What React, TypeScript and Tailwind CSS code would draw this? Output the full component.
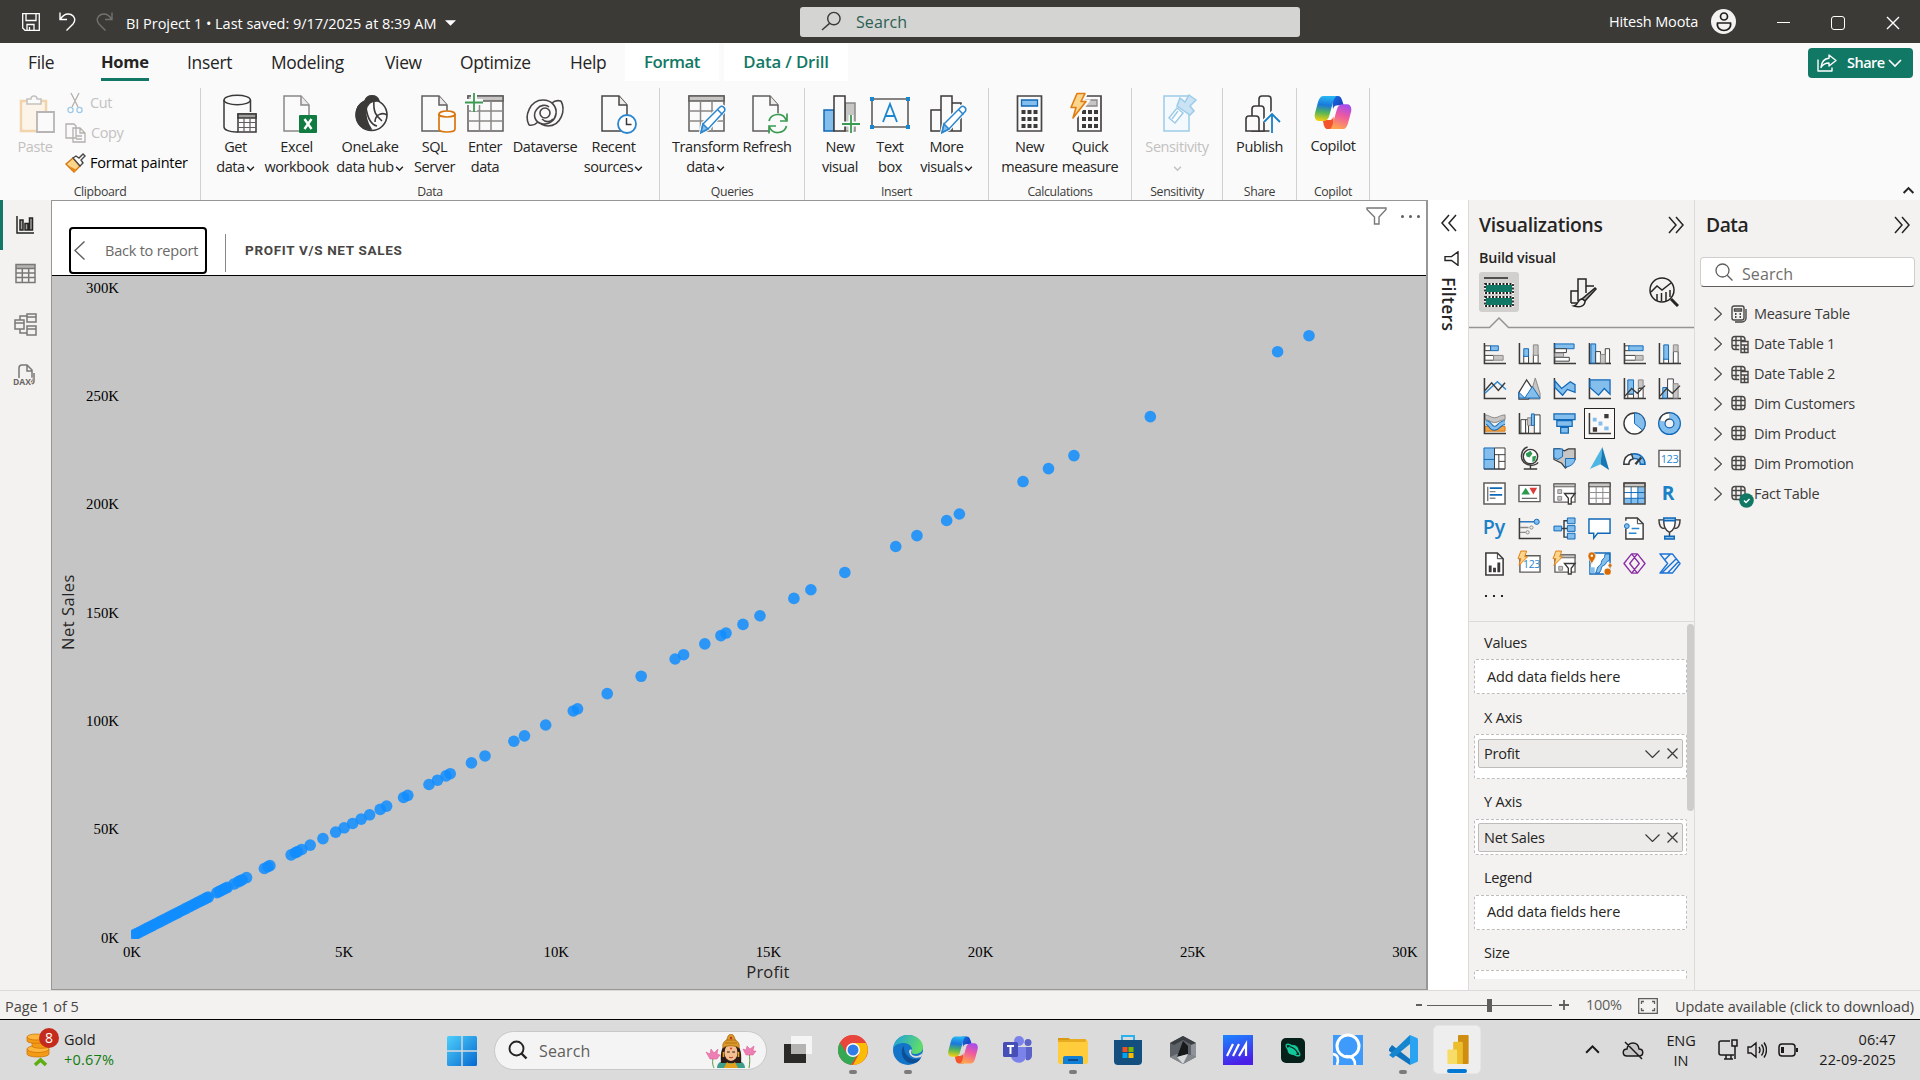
import React from "react";

type P = { children?: React.ReactNode };

const DARK = "#3b3a39";
const BLUE = "#1068b8";
const SKY = "#83beec";
const GREY = "#c8c6c4";
const MID = "#8a8886";

/* ---------- shared drawing helpers ---------- */

function Chevron({ dir = "down", className = "" }: { dir?: "down" | "right" | "left" | "up"; className?: string }) {
  const d = { down: "M2 5l6 6 6-6", right: "M5 2l6 6-6 6", left: "M11 2L5 8l6 6", up: "M2 11l6-6 6 6" }[dir];
  return (
    <svg viewBox="0 0 16 16" className={className} fill="none" stroke="currentColor">
      <path d={d} />
    </svg>
  );
}

function DoubleChevron({ left = false }: { left?: boolean }) {
  return (
    <svg viewBox="0 0 16 16" className="size-4 shrink-0 overflow-visible" fill="none" stroke="#252423" strokeWidth="1.5">
      {left ? <path d="M8 0L1 8l7 8M15 0L8 8l7 8" /> : <path d="M1 0l7 8-7 8M8 0l7 8-7 8" />}
    </svg>
  );
}

function CopilotLogo({ className }: { className: string }) {
  return (
    <svg viewBox="0 0 40 36" className={className}>
      <defs>
        <linearGradient id="cpA" x1="0.4" y1="0" x2="0.3" y2="1">
          <stop offset="0" stopColor="#27b6f2" />
          <stop offset="0.35" stopColor="#1a78dc" />
          <stop offset="0.65" stopColor="#52b45a" />
          <stop offset="1" stopColor="#f6d10c" />
        </linearGradient>
        <linearGradient id="cpB" x1="0.7" y1="0" x2="0.4" y2="1">
          <stop offset="0" stopColor="#a34bf0" />
          <stop offset="0.45" stopColor="#ee5aa0" />
          <stop offset="1" stopColor="#ffa64d" />
        </linearGradient>
        <linearGradient id="cpC" x1="0" y1="0" x2="1" y2="1">
          <stop offset="0" stopColor="#1b6fe0" />
          <stop offset="1" stopColor="#1234b8" />
        </linearGradient>
      </defs>
      <path d="M19 0h6c3 0 4 2 5 5l1.500 5h-6c-3 0-4.500 1-5.500 4z" fill="url(#cpC)" />
      <path d="M21 36h-6c-3 0-4-2-5-5l-1-5h6c3 0 4.500-1 5.500-4z" fill="#f2552c" />
      <path d="M10 0h14c-2 1-3 3-4 7l-4 14c-1 4-3 6-7 6H5c-4 0-6-4-4-10L4 6c1.200-4 3-6 6-6z" fill="url(#cpA)" />
      <path d="M30 36H16c2-1 3-3 4-7l4-14c1-4 3-6 7-6h4c4 0 6 4 4 10l-3 11c-1.200 4-3 6-6 6z" fill="url(#cpB)" />
    </svg>
  );
}

/* ---------- title bar ---------- */

function TitleBar() {
  return (
    <header className="flex h-[43px] shrink-0 items-center bg-[#3b3a37] text-white">
      <svg viewBox="0 0 18 18" className="ml-[22px] size-[18px]" fill="none" stroke="white" strokeWidth="1.3">
        <path d="M.7.7h16.600v16.600H3L.7 15zM4 .7v6.800h10V.7M5 17v-5.500h7V17M7.500 14v3" />
      </svg>
      <svg viewBox="0 0 18 19" className="ml-[19px] h-[19px] w-[18px]" fill="none" stroke="white" strokeWidth="1.4">
        <path d="M1 .5v7h7M1 7.500C4 3 8 1 12 2.500c4 2 5 6 2 9.500L7.500 18.500" />
      </svg>
      <svg viewBox="0 0 18 19" className="ml-[18px] h-[19px] w-[18px]" fill="none" stroke="#73726f" strokeWidth="1.4">
        <path d="M17 .5v7h-7M17 7.500C14 3 10 1 6 2.500 2 4.500 1 8.500 4 12l6.500 6.500" />
      </svg>
      <span className="mt-[5px] ml-[13px] w-[312px] whitespace-nowrap text-[14.5px] tracking-[-0.03px]">
        BI Project 1 • Last saved: 9/17/2025 at 8:39 AM
      </span>
      <svg viewBox="0 0 12 6" className="mt-[2px] ml-[7px] h-[6px] w-[11px]" fill="white">
        <path d="M0 0h12L6 6z" />
      </svg>
      <div className="ml-[344px] flex h-[30px] w-[500px] items-center rounded-[3px] bg-[#d4d4d2]">
        <svg viewBox="0 0 22 20" className="-mt-[2px] ml-[21px] h-5 w-[21px]" fill="none" stroke="#3b3a37" strokeWidth="1.5">
          <circle cx="13.500" cy="7.500" r="6.500" />
          <path d="M9 12.500L1 19.500" />
        </svg>
        <span className="ml-[14px] text-[16px] tracking-[0.1px] text-[#2b5f54]">Search</span>
      </div>
      <span className="ml-[309px] w-[89px] whitespace-nowrap text-[14.5px] tracking-[-0.15px]">Hitesh Moota</span>
      <span className="ml-[13px] flex size-[25px] items-center justify-center rounded-full bg-[#f3f2f1]">
        <svg viewBox="0 0 20 20" className="size-5" fill="none" stroke="#201f1e" strokeWidth="1.7">
          <circle cx="10" cy="4.500" r="3.500" />
          <path d="M3.500 11h13c1 5-3 7.500-6.500 7.500S2.500 16 3.500 11z" />
        </svg>
      </span>
      <span className="mt-[2px] ml-[41px] h-[1.5px] w-[13px] bg-white" />
      <span className="mt-[2px] ml-[41px] size-[14px] rounded-[3px] border-[1.5px] border-white" />
      <svg viewBox="0 0 14 14" className="mt-[2px] ml-[41px] size-[14px]" stroke="white" strokeWidth="1.4">
        <path d="M1 1l12 12M13 1L1 13" />
      </svg>
    </header>
  );
}

/* ---------- ribbon tabs ---------- */

function Tabs() {
  return (
    <div className="flex h-[38px] shrink-0 items-stretch whitespace-nowrap text-[17.4px] leading-[38px] tracking-[-0.3px] text-[#252423]">
      <span className="ml-7 w-[73px]">File</span>
      <span className="w-[48px] border-b-[3px] border-[#117865] text-[16.5px] font-bold tracking-[-0.25px]">Home</span>
      <span className="ml-[38px] w-[84px]">Insert</span>
      <span className="w-[114px]">Modeling</span>
      <span className="w-[75px]">View</span>
      <span className="w-[110px]">Optimize</span>
      <span className="w-[55px]">Help</span>
      <span className="flex w-[94px] justify-center bg-white text-[16.8px] font-semibold tracking-[-0.5px] text-[#117865]">Format</span>
      <span className="ml-[5px] flex w-[124px] justify-center bg-white text-[16.8px] font-semibold tracking-[-0.15px] text-[#117865]">
        Data / Drill
      </span>
      <span className="mt-[5px] mr-[7px] ml-auto flex h-[30px] w-[105px] items-center rounded-[4px] bg-[#117865] text-[14.5px] font-semibold tracking-[-0.5px] text-white">
        <svg viewBox="0 0 20 18" className="ml-[9px] h-[18px] w-5" fill="none" stroke="white" strokeWidth="1.4" strokeLinejoin="round">
          <path d="M1 5.500V17h14v-3.500M12 1l7 5.500-7 5.500V9c-4 0-6 1-8 4.500C4.500 8 7.500 4.500 12 4.200z" />
        </svg>
        <span className="ml-[10px]">Share</span>
        <Chevron className="ml-[2px] size-4 stroke-[1.6]" />
      </span>
    </div>
  );
}

/* ---------- ribbon icons (40 x 40 boxes) ---------- */

function Page({ x = 4, s = "#605e5c" }: { x?: number; s?: string }) {
  return (
    <g transform={`translate(${x} 0)`} fill="#fafafa" stroke={s} strokeWidth="1.500">
      <path d="M1 2h17l8 9v26H1z" />
      <path d="M18 2v9h8" fill="#edebe9" />
    </g>
  );
}

const pencil = (
  <g stroke="#2a86cf" strokeWidth="1.500">
    <path d="M17 30L34 13c2-2 6 1 4 4L22 35l-7 3.500z" fill="#fff" stroke="#fafafa" strokeWidth="4" />
    <path d="M17 30L34 13c2-2 6 1 4.500 4L22 35l-7 3.500z" fill="#fff" />
    <path d="M17 30l5 5-7 3.500z" fill={SKY} />
    <path d="M31.500 15.500l5 5" />
  </g>
);

const ribbonIcons: Record<string, React.ReactNode> = {
  paste: (
    <g strokeWidth="1.500" opacity="0.75">
      <path d="M6 7h25v30H6z" fill="#fdf3e4" stroke="#f0c690" strokeWidth="2.500" />
      <path d="M12 9V5h4c0-4 6-4 6 0h4v5H12z" fill="#fafafa" stroke="#b3b0ad" />
      <path d="M22 18h17v20H22z" fill="#fafafa" stroke="#a19f9d" strokeWidth="1.800" />
    </g>
  ),
  getdata: (
    <g fill="#fafafa" stroke="#3b3a39" strokeWidth="1.500">
      <path d="M8 6v27c0 3 6 5 12 5h2M34.500 6v12" />
      <ellipse cx="21.200" cy="6" rx="13.200" ry="4.800" />
      <path d="M22 20h18v18H22z" />
      <path d="M22 20h18v4H22z" fill="#a19f9d" />
      <path d="M28 24v14M34 24v14M22 28.500h18M22 33.500h18" stroke="#605e5c" strokeWidth="1.200" />
    </g>
  ),
  excel: (
    <g>
      <Page x={6} s="#8a8886" />
      <rect x="22" y="21" width="18" height="18" rx="1" fill="#107c41" />
      <path d="M27.500 25l7 10M34.500 25l-7 10" stroke="white" strokeWidth="2.400" />
    </g>
  ),
  onelake: (
    <g fill="none" stroke="#3b3a39" strokeWidth="1.600">
      <circle cx="21.500" cy="21" r="15.500" />
      <path d="M8 13c2-3 5-5 7-6 2-7 12-7 14 0-8-1-12 3-13 9-1 7 1 13 5 19C11 36 3 26 8 13z" fill="#3b3a39" />
      <path d="M16 14c2 12 6 17 11 18M24 6c-1 12 2 16 8 21M25 28c0-8 8-10 12-7" />
    </g>
  ),
  sql: (
    <g>
      <Page x={6} />
      <path d="M24 20v15c0 4 16 4 16 0V20" fill="#fafafa" stroke="#d8750c" strokeWidth="1.700" />
      <ellipse cx="32" cy="20" rx="8" ry="3" fill="#fff" stroke="#d8750c" strokeWidth="1.700" />
    </g>
  ),
  enter: (
    <g fill="#fafafa" stroke="#605e5c" strokeWidth="1.500">
      <path d="M3 2h35v35H3z" />
      <path d="M3 2h35v5H3z" fill={GREY} />
      <path d="M14.500 7v30M26 7v30M3 17h35M3 27h35" stroke={MID} />
      <path d="M9-1v18M0 8h18" stroke="#fafafa" strokeWidth="6" />
      <path d="M9-1v19M0 8.500h18" stroke="#3a9b52" strokeWidth="1.800" />
    </g>
  ),
  dataverse: (
    <g fill="none" stroke="#484644" strokeWidth="1.600">
      <circle cx="20" cy="19" r="5" />
      <path d="M4 31C-1 22 5 6 18 6c9 0 14 7 13 14-1 6-7 11-13 10-8-1-11-9-6-15 3-4 9-5 12-2" />
      <path d="M36 7c5 9 0 25-13 25-3 0-5-1-7-2M4 31c4 1 7-1 9-3M36 7c-4-1-7 0-9 2" />
      <path d="M28 25c-3 4-8 3-11 0" />
    </g>
  ),
  recent: (
    <g>
      <Page x={7} s="#484644" />
      <circle cx="33" cy="30" r="9" fill="#fff" stroke="#2a86cf" strokeWidth="1.800" />
      <path d="M32.500 24v6.500h5" fill="none" stroke="#3b3a39" strokeWidth="1.500" />
    </g>
  ),
  transform: (
    <g fill="#fafafa" stroke="#605e5c" strokeWidth="1.500">
      <path d="M3 2h35v35H3z" />
      <path d="M3 2h35v5H3z" fill={GREY} />
      <path d="M14.500 7v30M26 7v30M3 17h35M3 27h35" stroke={MID} />
      {pencil}
    </g>
  ),
  refresh: (
    <g>
      <Page x={5} s="#605e5c" />
      <circle cx="31" cy="30" r="11" fill="#fafafa" />
      <path d="M22 27c2-8 14-9 17-1M40 19.500V27h-7M39.500 32c-2 8-14 9-17 1M22 39.500V32h7" fill="none" stroke="#3a9b52" strokeWidth="1.700" />
    </g>
  ),
  newvisual: (
    <g stroke="#3b3a39" strokeWidth="1.500">
      <path d="M25 9h10v28H25z" fill={GREY} stroke={MID} />
      <path d="M4 16h10v21H4z" fill={SKY} stroke={BLUE} />
      <path d="M14 2h11v35H14z" fill="#fafafa" />
      <path d="M31 21v18M22 30h18" stroke="#fafafa" strokeWidth="5" />
      <path d="M31 21v18M22 30h18" stroke="#3a9b52" strokeWidth="1.800" />
    </g>
  ),
  textbox: (
    <g>
      <path d="M2 5h36v28H2z" fill="#fafafa" stroke="#605e5c" strokeWidth="1.600" />
      <path d="M0 3h4v4H0zM36 3h4v4h-4zM0 31h4v4H0zM36 31h4v4h-4z" fill="#1a86d0" />
      <path d="M13 28l7-18 7 18M15.500 22h9" fill="none" stroke="#1a86d0" strokeWidth="1.800" />
    </g>
  ),
  morevisuals: (
    <g fill="#fafafa" stroke="#3b3a39" strokeWidth="1.500">
      <path d="M25 9h9v28h-9zM4 16h10v21H4zM14 2h11v35H14z" />
      {pencil}
    </g>
  ),
  newmeasure: (
    <g>
      <path d="M7.500 2h24v35h-24z" fill="#fafafa" stroke="#484644" strokeWidth="1.700" />
      <path d="M11.500 6h16v6h-16z" fill={SKY} stroke={BLUE} strokeWidth="1.300" />
      <path d="M11.500 16h4v4h-4zM17.500 16h4v4h-4zM23.500 16h4v4h-4zM11.500 23h4v4h-4zM17.500 23h4v4h-4zM23.500 23h4v4h-4zM11.500 30h4v4h-4zM17.500 30h4v4h-4zM23.500 30h4v4h-4z" fill="#3b3a39" />
    </g>
  ),
  quick: (
    <g>
      <path d="M8 2h23v35H8z" fill="#fafafa" stroke="#484644" strokeWidth="1.700" />
      <path d="M12 6h15v6H12z" fill={GREY} stroke={MID} strokeWidth="1.300" />
      <path d="M12 16h4v4h-4zM18 16h4v4h-4zM24 16h4v4h-4zM12 23h4v4h-4zM18 23h4v4h-4zM24 23h4v4h-4zM12 30h4v4h-4zM18 30h4v4h-4zM24 30h4v4h-4z" fill="#3b3a39" />
      <path d="M7 0h8l-4 8h5L4 24l2-11H1z" fill="#fbd58b" stroke="#fafafa" strokeWidth="5" />
      <path d="M7-.5h8l-4 8h5L3 24l3-10.500H1z" fill="#fbd58b" stroke="#e07d10" strokeWidth="1.600" strokeLinejoin="round" />
    </g>
  ),
  sensitivity: (
    <g fill="#f3f9fd" stroke="#9dcbe8" strokeWidth="1.500">
      <path d="M7 2h25v35H7z" />
      <path d="M12 24l8-10 6 5-8 10zM15 25l6-8" fill="#fff" />
      <path d="M23 4l5 4 4-7 7 5-6 6 4 5-4 4-13-9z" fill="#c9e3f4" />
    </g>
  ),
  publish: (
    <g fill="#fafafa" stroke="#3b3a39" strokeWidth="1.600">
      <path d="M19 37V5c0-2 1-3 3-3h6c2 0 3 1 3 3v32z" />
      <path d="M12 37V15c0-2 1-3 3-3h6c2 0 3 1 3 3v22z" />
      <path d="M6 37V25c0-2 1-3 3-3h7c2 0 3 1 3 3v12z" />
      <path d="M32 39V20M24 28l8-8 8 8" fill="none" stroke="#fafafa" strokeWidth="5" />
      <path d="M32 39V20M24 28l8-8 8 8" fill="none" stroke="#1a7fc4" strokeWidth="1.800" />
    </g>
  ),
};

function RibbonButton({
  icon,
  l1,
  l2,
  caret,
  width,
  dim,
}: {
  icon: string;
  l1: string;
  l2?: string;
  caret?: boolean;
  width: string;
  dim?: boolean;
}) {
  return (
    <div className={`flex shrink-0 flex-col items-center whitespace-nowrap leading-5 ${width} ${dim ? "text-[#c3c1bf]" : "text-[#252423]"}`}>
      {icon === "copilot" ? (
        <CopilotLogo className="mt-[2px] mb-[4px] h-[34px] w-[38px]" />
      ) : (
        <svg viewBox="0 0 40 40" className="size-10 overflow-visible">
          {ribbonIcons[icon]}
        </svg>
      )}
      <span className="mt-[3px]">{l1}</span>
      <span className="flex h-5 items-center">
        {l2}
        {caret && <Chevron className="mt-[3px] ml-px size-[9px] stroke-[2.6]" />}
      </span>
    </div>
  );
}

function Group({ name, width, pad = "", children }: P & { name: string; width: string; pad?: string }) {
  return (
    <div className={`flex shrink-0 flex-col border-r border-[#d2d0ce] ${width}`}>
      <div className={`flex h-[88px] ${pad}`}>{children}</div>
      <span className="mt-[6px] text-center text-[12.3px] leading-5 tracking-[-0.35px] text-[#3b3a39]">{name}</span>
    </div>
  );
}

function Ribbon() {
  return (
    <div className="flex h-[119px] shrink-0 pt-[7px] text-[14.5px] tracking-[-0.4px]">
      <Group name="Clipboard" width="w-[201px]">
        <div className="flex w-full pt-[6px]">
          <RibbonButton icon="paste" l1="Paste" width="w-[70px]" dim />
          <div className="-mt-[6px] -ml-[5px] flex flex-col leading-[30px] whitespace-nowrap">
            <span className="flex h-[30px] items-center gap-[5px] text-[#c3c1bf]">
              <svg viewBox="0 0 20 22" className="h-[22px] w-5" fill="none" strokeWidth="1.300">
                <path d="M6 1l7 14M14 1L7 15" stroke="#b3b0ad" />
                <circle cx="5.500" cy="18" r="2.600" stroke="#9fc9e6" />
                <circle cx="14.500" cy="18" r="2.600" stroke="#9fc9e6" />
              </svg>
              Cut
            </span>
            <span className="flex h-[30px] items-center gap-[5px] text-[#c3c1bf]">
              <svg viewBox="0 0 21 20" className="h-5 w-[21px]" fill="#fafafa" stroke="#b3b0ad" strokeWidth="1.300">
                <path d="M1 1h8l2 2v12H1zM8 5h7l5 5v9H8zM15 5v5h5M11 13h6M11 16h6" />
              </svg>
              Copy
            </span>
            <span className="flex h-[30px] items-center gap-[4px]">
              <svg viewBox="0 0 21 20" className="h-5 w-[21px]" strokeWidth="1.400">
                <path d="M1 11l7-6 7 8-6 6z" fill="#fbd58b" stroke="#d8750c" />
                <path d="M4 13l8 4-3 2z" fill="#e88a1a" />
                <path d="M8 5l3-2 3 2 4-4 2 2-4 4 2 3-3 3z" fill="#fff" stroke="#484644" />
              </svg>
              <span className="tracking-[-0.25px]">Format painter</span>
            </span>
          </div>
        </div>
      </Group>
      <Group name="Data" width="w-[459px]" pad="pl-[4px] pt-[6px]">
        <RibbonButton icon="getdata" l1="Get" l2="data" caret width="w-[61px]" />
        <RibbonButton icon="excel" l1="Excel" l2="workbook" width="w-[61px]" />
        <RibbonButton icon="onelake" l1="OneLake" l2="data hub" caret width="w-[86px]" />
        <RibbonButton icon="sql" l1="SQL" l2="Server" width="w-[43px]" />
        <RibbonButton icon="enter" l1="Enter" l2="data" width="w-[58px]" />
        <RibbonButton icon="dataverse" l1="Dataverse" width="w-[62px]" />
        <RibbonButton icon="recent" l1="Recent" l2="sources" caret width="w-[75px]" />
      </Group>
      <Group name="Queries" width="w-[145px]" pad="pl-[9px] pt-[6px]">
        <RibbonButton icon="transform" l1="Transform" l2="data" caret width="w-[73px]" />
        <RibbonButton icon="refresh" l1="Refresh" width="w-[50px]" />
      </Group>
      <Group name="Insert" width="w-[184px]" pad="pl-[7px] pt-[6px]">
        <RibbonButton icon="newvisual" l1="New" l2="visual" width="w-[56px]" />
        <RibbonButton icon="textbox" l1="Text" l2="box" width="w-[44px]" />
        <RibbonButton icon="morevisuals" l1="More" l2="visuals" caret width="w-[69px]" />
      </Group>
      <Group name="Calculations" width="w-[143px]" pad="pl-[12px] pt-[6px]">
        <RibbonButton icon="newmeasure" l1="New" l2="measure" width="w-[57px]" />
        <RibbonButton icon="quick" l1="Quick" l2="measure" width="w-[64px]" />
      </Group>
      <Group name="Sensitivity" width="w-[91px]" pad="pt-[6px]">
        <RibbonButton icon="sensitivity" l1="Sensitivity" caret width="w-[90px]" dim />
      </Group>
      <Group name="Share" width="w-[74px]" pad="pt-[6px]">
        <RibbonButton icon="publish" l1="Publish" width="w-[73px]" />
      </Group>
      <Group name="Copilot" width="w-[73px]" pad="pt-[6px]">
        <RibbonButton icon="copilot" l1="Copilot" width="w-[72px]" />
      </Group>
      <Chevron dir="up" className="mr-[5px] mb-[3px] ml-auto size-[13px] self-end stroke-[2.5] text-[#252423]" />
    </div>
  );
}

/* ---------- left navigation ---------- */

function NavItem({ active, children }: P & { active?: boolean }) {
  return (
    <div className={`flex h-[50px] items-center justify-center ${active ? "border-l-[3px] border-[#117865] pr-[5px]" : "pr-[2px]"}`}>
      <svg viewBox="0 0 24 24" className="size-6 overflow-visible" fill="none" stroke={active ? "#252423" : "#7a7876"} strokeWidth="1.500">
        {children}
      </svg>
    </div>
  );
}

function LeftNav() {
  return (
    <nav className="w-[51px] shrink-0 bg-[#f3f2f1]">
      <NavItem active>
        <path d="M4 3v17h17" />
        <path d="M7 7h3v10H7zM12 10.500h3V17h-3zM16.500 5h3v12h-3z" fill="#a19f9d" />
      </NavItem>
      <NavItem>
        <path d="M3 1.500h19v18H3zM3 5.500h19M3 10h19M3 14.500h19M9.300 5.500v14M15.700 5.500v14" />
        <path d="M3 3.500h19" strokeWidth="3" opacity="0.5" />
      </NavItem>
      <NavItem>
        <path d="M2 7h9v9H2zM2 10h9M14 1h9v8h-9zM14 4h9M14 13h9v9h-9zM14 16h9M7 7V3h7M7 16v4h7" />
      </NavItem>
      <NavItem>
        <path d="M6 15V5c0-2 1-3 3-3h5l5 5v10c0 1-1 2-2 2M14 2v6h5M21 10v8c0 2-1 3-3 3" />
        <text x="0" y="21.500" fontSize="8.500" fontWeight="700" fill="#6a6866" stroke="#f3f2f1" strokeWidth="2.500" paintOrder="stroke">
          DAX
        </text>
      </NavItem>
    </nav>
  );
}

/* ---------- scatter chart ---------- */

const profits = [
  27.74, 27, 24, 22.2, 21.6, 21, 19.5, 19.2, 18.5, 18, 16.8, 16, 15.6, 14.8, 14.4, 14, 13.88, 13.5, 13, 12.8, 12, 11.2, 10.5, 10.4,
  9.75, 9.25, 9, 8.32, 8, 7.5, 7.4, 7.2, 7, 6.5, 6.4, 6, 5.85, 5.6, 5.4, 5.2, 5, 4.8, 4.5, 4.2, 4, 3.9, 3.85, 3.75, 3.25, 3.2, 3.12,
  2.7, 2.6, 2.55, 2.5, 2.4, 2.25, 2.2, 2.16, 2.1, 2.05, 2, 1.8, 1.76,
];
for (let p = 1.72; p >= 0; p -= 0.06) profits.push(p);

const px = (p: number) => 132 + p * 42.43;
const py = (p: number) => 936 - p * 21.64;

function Scatter() {
  return (
    <svg viewBox="52 276 1374 713" className="h-[713px] w-[1374px]">
      <clipPath id="plot">
        <rect x="131" y="276" width="1290" height="663" />
      </clipPath>
      <g fill="#118dff" fillOpacity="0.85" clipPath="url(#plot)">
        {profits.map((p, i) => (
          <circle key={i} cx={px(p)} cy={py(p)} r="5.8" />
        ))}
      </g>
      <g fontFamily="'Liberation Serif', serif" fontSize="14.800" fill="#000">
        {[0, 50, 100, 150, 200, 250, 300].map((v) => (
          <text key={v} x="119" y={942.6 - v * 2.167} textAnchor="end">
            {v}K
          </text>
        ))}
        {[0, 5, 10, 15, 20, 25, 30].map((v) => (
          <text key={v} x={px(v)} y="957" textAnchor="middle">
            {v}K
          </text>
        ))}
      </g>
      <g fill="#252423" fontSize="16.500" textAnchor="middle">
        <text x="768" y="978" letterSpacing="0.200">
          Profit
        </text>
        <text transform="translate(74 612) rotate(-90)" letterSpacing="0.500">
          Net Sales
        </text>
      </g>
    </svg>
  );
}

function Canvas() {
  return (
    <main className="flex w-[1377px] shrink-0 flex-col border border-r-2 border-[#999795] bg-[#c5c5c5]">
      <div className="flex h-[75px] shrink-0 border-b border-black bg-white">
        <div className="mt-[26px] ml-[17px] flex h-[47px] w-[138px] items-center rounded-[4px] border-2 border-black text-[#6b6967]">
          <svg viewBox="0 0 11 19" className="ml-[3px] h-[19px] w-[11px]" fill="none" stroke="#605e5c" strokeWidth="1.400">
            <path d="M10.500.5l-9.500 9 9.500 9" />
          </svg>
          <span className="ml-[20px] whitespace-nowrap text-[14.5px] tracking-[-0.22px]">Back to report</span>
        </div>
        <div className="mt-[33px] ml-[18px] h-[38px] w-px bg-[#8a8886]" />
        <span className="mt-[39px] ml-[19px] font-['Roboto'] text-[13.5px] leading-5 font-bold tracking-[0.68px] whitespace-nowrap text-[#484644]">
          PROFIT V/S NET SALES
        </span>
        <svg viewBox="0 0 21 18" className="mt-[6px] ml-auto h-[18px] w-[21px]" fill="none" stroke="#7a7876" strokeWidth="1.400">
          <path d="M1 1h19v1.500L13 10v7H8.500v-7L1 2.500z" />
        </svg>
        <div className="mt-[14px] mr-[6px] ml-[14px] flex h-[3px] gap-[5px]">
          <i className="size-[3px] rounded-full bg-[#605e5c]" />
          <i className="size-[3px] rounded-full bg-[#605e5c]" />
          <i className="size-[3px] rounded-full bg-[#605e5c]" />
        </div>
      </div>
      <Scatter />
    </main>
  );
}

/* ---------- filters pane ---------- */

function FiltersPane() {
  return (
    <aside className="flex w-[40px] shrink-0 flex-col items-center bg-white pt-[15px] pl-px">
      <DoubleChevron left />
      <svg viewBox="0 0 15 15" className="mt-[20px] ml-[6px] size-[15px]" fill="none" stroke="#252423" strokeWidth="1.400">
        <path d="M14 .8v13.500L7.500 9.500H1V5.600h6.500z" />
      </svg>
      <span className="mt-[11px] ml-px text-[17.5px] leading-5 font-semibold tracking-[0.3px] text-[#252423] [writing-mode:vertical-rl]">
        Filters
      </span>
    </aside>
  );
}

/* ---------- visual gallery ---------- */

const ax = <path d="M1.500 1v21.500H24" fill="none" stroke={DARK} strokeWidth="1.600" />;

const visualIcons: React.ReactNode[] = [
  <g key="0">{ax}<path d="M2 4h6v5H2zM2 14h9v5H2z" fill="#fff" stroke={DARK} /><path d="M8 4h8v5H8z" fill={SKY} stroke={BLUE} /><path d="M11 14h10v5H11z" fill={GREY} stroke={MID} /></g>,
  <g key="1">{ax}<path d="M6 14h5v8H6zM16 13h5v9h-5z" fill="#fff" stroke={DARK} /><path d="M6 7h5v8H6z" fill={SKY} stroke={BLUE} /><path d="M16 3h5v11h-5z" fill={GREY} stroke={MID} /></g>,
  <g key="2">{ax}<path d="M2 2h20v5H2z" fill={SKY} stroke={BLUE} /><path d="M2 7h12v4H2zM2 16h15v4H2z" fill="#fff" stroke={DARK} /><path d="M2 11.500h9v4H2z" fill={GREY} stroke={MID} /></g>,
  <g key="3">{ax}<path d="M3 2h5v20H3z" fill={SKY} stroke={BLUE} /><path d="M8 10h5v12H8zM18 7h4.500v15H18z" fill="#fff" stroke={DARK} /><path d="M13 13h5v9h-5z" fill={GREY} stroke={MID} /></g>,
  <g key="4">{ax}<path d="M2 4h5v5H2zM2 14h11v5H2z" fill="#fff" stroke={DARK} /><path d="M6 4h15v5H6z" fill={SKY} stroke={BLUE} /><path d="M13 14h8v5h-8z" fill={GREY} stroke={MID} /></g>,
  <g key="5">{ax}<path d="M6 17h5v5H6zM16 10h5v12h-5z" fill="#fff" stroke={DARK} /><path d="M6 3h5v15H6z" fill={SKY} stroke={BLUE} /><path d="M16 3h5v7h-5z" fill={GREY} stroke={MID} /></g>,
  <g key="6" fill="none">{ax}<path d="M2 17L15 5l9 8" stroke="#2a86cf" strokeWidth="1.500" /><path d="M2 14l7-8 7 8 7-8" stroke={DARK} strokeWidth="1.500" /></g>,
  <g key="7"><path d="M12 22L18 1l5 16v6H12z" fill={GREY} stroke={MID} /><path d="M1 16L9 3l8 12-6 8H1z" fill="#fff" stroke={DARK} strokeWidth="1.300" /><path d="M1 16l6 6 8-12 8 12H1z" fill={SKY} stroke={BLUE} /></g>,
  <g key="8">{ax}<path d="M2 4l7 8 9-7 5 3v8l-8-3-5 6-8-8z" fill={SKY} stroke={BLUE} strokeWidth="1.300" /></g>,
  <g key="9">{ax}<path d="M2 3h21v15l-6-6-6 7-9-8z" fill={SKY} stroke={BLUE} strokeWidth="1.300" /></g>,
  <g key="10">{ax}<path d="M5 3h6v15H5z" fill={SKY} stroke={BLUE} /><path d="M16 3h5v8h-5z" fill={GREY} stroke={MID} /><path d="M5 18h6v4H5zM16 12h5v10h-5z" fill="#fff" stroke={DARK} /><path d="M2 20l7-8 6 5 8-8" fill="none" stroke={DARK} strokeWidth="1.400" /></g>,
  <g key="11">{ax}<path d="M5 11h5v11H5z" fill={SKY} stroke={BLUE} /><path d="M10 2h6v20h-6z" fill="#fff" stroke={DARK} /><path d="M16 7h5v15h-5z" fill={GREY} stroke={MID} /><path d="M2 20l7-8 6 5 8-8" fill="none" stroke={DARK} strokeWidth="1.400" /></g>,
  <g key="12"><path d="M2 15h21v5H2z" fill="#f4a340" stroke="#d8750c" /><path d="M2 3c4 0 6 3 10 3s6-3 11-3v5c-5 0-7 3-11 3S6 8 2 8z" fill={GREY} stroke={MID} /><path d="M3 11c5 0 4 6 9 6s5-6 11-6" fill="none" stroke={BLUE} strokeWidth="5" /><path d="M3 11c5 0 4 6 9 6s5-6 11-6" fill="none" stroke={SKY} strokeWidth="3" />{ax}</g>,
  <g key="13" stroke={DARK}>{ax}<path d="M3 8h5v14H3zM17 3h6v19h-6z" fill="#fff" /><path d="M8 8h3v14H8z" fill="#fff" /><path d="M10 6h4v8h-4z" fill={GREY} stroke={MID} /><path d="M14 2h3v12h-3z" fill={SKY} stroke={BLUE} /></g>,
  <g key="14" fill={SKY} stroke={BLUE} strokeWidth="1.300"><path d="M1 2h22v6H1zM4 9h16v6H4zM8 16h8v6H8z" /></g>,
  <g key="15">{ax}<path d="M17 2h4.500v4.500H17zM5 16h4.500v4.500H5z" fill={DARK} /><path d="M5 6h4v4H5zM11 10h4v4h-4zM17 15h4.500v4H17z" fill={SKY} /></g>,
  <g key="16"><circle cx="12" cy="12" r="11" fill="#fff" stroke={DARK} strokeWidth="1.500" /><path d="M12 1a11 11 0 0 1 8.500 18L12 12z" fill={SKY} stroke={BLUE} /></g>,
  <g key="17" fill="none"><circle cx="12" cy="12" r="8" stroke={BLUE} strokeWidth="8" /><circle cx="12" cy="12" r="8" stroke={SKY} strokeWidth="5.500" /><path d="M4.500 9.500C5.500 6 8 4 12 4" stroke={DARK} strokeWidth="7.500" /><path d="M4.500 9.500C5.500 6 8 4 12 4" stroke="#fff" strokeWidth="5" /></g>,
  <g key="18"><path d="M1 1h11v22H1z" fill={SKY} stroke={BLUE} /><path d="M12 1h11v22H12z" fill="#fff" stroke={DARK} /><path d="M1 13h11" stroke={BLUE} /><path d="M12 8h11M16.500 8v15M16.500 15H23" stroke={DARK} /><path d="M1 23h22" stroke={DARK} /></g>,
  <g key="19" fill="none" stroke={DARK} strokeWidth="1.500"><circle cx="13" cy="10" r="7.500" fill="#fff" /><path d="M10 0C3 2 2 12 6 16s12 4 15 0M13 19v4M6 23h14" /><path d="M8 7l5-3 2 3-3 4-3-1zM15 10l4-1-1 5-3 2z" fill="#2e9a50" stroke="none" /></g>,
  <g key="20"><path d="M1 2h6l5 2 4-2h7v11l-4 3-6 6-4-5-8-4z" fill={GREY} stroke={DARK} strokeWidth="1.300" /><path d="M1 2h9v8l-5 3-4-2zM13 12h10c0 5-4 7-6 8l-4 1z" fill={SKY} stroke={BLUE} /></g>,
  <g key="21"><path d="M15 0L2 23l11-5z" fill="#4db6e2" /><path d="M15 0l-2 18 9 6z" fill="#1878b4" /></g>,
  <g key="22" strokeWidth="1.500"><path d="M1 18c0-6 5-11 11-11s11 5 11 11h-5c0-3-2-6-6-6s-6 3-6 6z" fill={SKY} stroke={BLUE} /><path d="M1 18C1 12 4 8 9 7.500l1.500 4.700C7 13 6 15 6 18z" fill="#fff" stroke={DARK} /><path d="M19 11l-6 7" stroke={DARK} strokeWidth="2.500" /></g>,
  <g key="23"><path d="M1 3.500h22v17H1z" fill="#fff" stroke="#605e5c" strokeWidth="1.500" /><text x="12" y="16.500" fontSize="11.500" textAnchor="middle" fill="#2a86cf" letterSpacing="-0.500">123</text></g>,
  <g key="24"><path d="M1 1h22v22H1z" fill="#fff" stroke="#605e5c" strokeWidth="1.600" /><path d="M5 5v15" stroke={DARK} /><path d="M7 6.500h13M7 13.500h13" stroke={BLUE} strokeWidth="1.800" /><path d="M7 10h6M7 17h6" stroke={MID} strokeWidth="1.400" /></g>,
  <g key="25"><path d="M1 3.500h22v17H1z" fill="#fff" stroke="#605e5c" strokeWidth="1.500" /><path d="M3.500 13L8 6l4.500 7z" fill="#2e9a50" /><path d="M12 6h8l-4 7z" fill="#e03b3b" /><path d="M4 17h16" stroke={DARK} /></g>,
  <g key="26"><path d="M1 2h22v19H1z" fill="#fff" stroke="#605e5c" strokeWidth="1.400" /><path d="M1 2h22v3H1z" fill={GREY} stroke="#605e5c" /><path d="M5 8h4v4H5zM5 15h4v4H5z" fill={GREY} stroke={MID} /><path d="M12 12h11l-4 5v6h-3v-6z" fill="#fff" stroke={DARK} strokeWidth="1.400" /></g>,
  <g key="27"><path d="M1 1h22v22H1z" fill="#fff" stroke="#484644" strokeWidth="1.500" /><path d="M1 1h22v4H1z" fill={GREY} stroke="#484644" /><path d="M8.500 5v18M15.500 5v18M1 11h22M1 17h22" stroke={MID} /></g>,
  <g key="28"><path d="M1 1h22v22H1z" fill="#fff" /><path d="M15.500 5H23v18H1v-6h14.500z" fill={SKY} /><path d="M1 1h22v4H1z" fill={GREY} stroke="#484644" /><path d="M8.500 5v18M15.500 5v18M1 11h22M1 17h22" stroke={BLUE} /><path d="M1 1h22v22H1z" fill="none" stroke="#484644" strokeWidth="1.500" /></g>,
  <text key="29" x="10.500" y="19" fontSize="20" fontWeight="700" textAnchor="middle" fill="#1a80c8">R</text>,
  <text key="30" x="11.500" y="18" fontSize="20.500" fontWeight="600" textAnchor="middle" fill="#1a80c8">Py</text>,
  <g key="31" fill="none">{ax}<path d="M2 5h15" stroke={BLUE} strokeWidth="1.400" /><circle cx="19.500" cy="5" r="2.700" fill={SKY} stroke={BLUE} /><path d="M2 11h9M2 16h6" stroke={MID} strokeWidth="1.400" /><circle cx="14" cy="11" r="1.700" stroke={MID} /><circle cx="10" cy="16" r="1.700" stroke={MID} /></g>,
  <g key="32" fill={SKY} stroke={BLUE}><path d="M8 12h7M11.500 12V4H16M11.500 12v9H16" fill="none" stroke={DARK} strokeWidth="1.500" /><path d="M1 9.500h8v5H1zM15 1h8v6h-8zM15 9h8v6h-8zM15 17h8v6h-8z" /></g>,
  <path key="33" d="M1 2h22v15H10l-4 5v-5H1z" fill="#fff" stroke={BLUE} strokeWidth="1.500" />,
  <g key="34"><path d="M3 4V1h12l6 6v16H3V12" fill="#fff" stroke={DARK} strokeWidth="1.500" /><path d="M15 1v6h6" fill="none" stroke={DARK} /><circle cx="4" cy="9.500" r="2.500" fill={SKY} stroke={BLUE} /><path d="M9 12h8M6 17h8" stroke="#2a86cf" strokeWidth="1.500" /></g>,
  <g key="35" fill="none" stroke={DARK} strokeWidth="1.500"><path d="M6 3H1c0 6 2 9 6 9M18 3h5c0 6-2 9-6 9" /><path d="M6 2h12c0 8-1 11-6 14C7 13 6 10 6 2zM12 16v4" fill="#fff" /><path d="M6 1h12v3H6zM7 20h10v3H7z" fill={SKY} stroke={BLUE} /></g>,
  <g key="36"><path d="M3 1h12l6 6v17H3z" fill="#fff" stroke={DARK} strokeWidth="1.600" /><path d="M15 1v6h6" fill="none" stroke={DARK} /><path d="M6 14h3v7H6zM10.500 16.500h3V21h-3zM15 11h3v10h-3z" fill={DARK} /></g>,
  <g key="37"><path d="M2 4h21v17H2z" fill="#fff" stroke="#605e5c" strokeWidth="1.500" /><text x="14" y="16.500" fontSize="11" textAnchor="middle" fill="#2a86cf" letterSpacing="-0.500">123</text><path d="M3-1h6L7 5h3L1 14l2-7H0z" fill="#fbd58b" stroke="#e07d10" /></g>,
  <g key="38"><path d="M2 3h21v18H2z" fill="#fff" stroke="#605e5c" strokeWidth="1.400" /><path d="M2 3h21v3H2z" fill={GREY} stroke="#605e5c" /><path d="M6 15h4v4H6z" fill={GREY} stroke={MID} /><path d="M12 12h11l-4 5v6h-3v-6z" fill="#fff" stroke={DARK} strokeWidth="1.400" /><path d="M3-1h6L7 5h3L1 14l2-7H0z" fill="#fbd58b" stroke="#e07d10" /></g>,
  <g key="39"><path d="M3 1h20v22H2V5z" fill="#fff" stroke={BLUE} strokeWidth="1.400" /><path d="M22.500 2v7c-4 0-3 4-6 5-3 0-2 5-5 8H8c2-4 1-6 4-8 3-1 1-5 4-7 2-1 1-4 2-5z" fill={SKY} stroke={BLUE} /><path d="M2 16h5v6H2z" fill={SKY} /><path d="M0 4a4 4 0 0 1 8 0c0 3.500-3 5-4 9C3 9 0 7.500 0 4z" fill="#d86a00" stroke="#f3f2f1" strokeWidth="0.600" /><circle cx="4" cy="3.800" r="1.300" fill="#fff" /><circle cx="20.500" cy="20.500" r="4.500" fill="#f3f2f1" /><circle cx="20.500" cy="20.500" r="3.300" fill="#d86a00" /><circle cx="23" cy="14" r="2" fill="#d86a00" stroke="#f3f2f1" strokeWidth="0.600" /></g>,
  <path key="40" d="M9 2h6l8 10-8 10H9L1 12zM9 2l8 10-8 10M15 2L7 12l8 10" fill="none" stroke="#8a2da5" strokeWidth="1.400" strokeLinejoin="round" />,
  <g key="41" fill="none" stroke="#1a73d8" strokeWidth="1.500" strokeLinejoin="round"><path d="M2 2h13l8 10-8 10H2l8-10zM4 22L19 7M10 22L21.500 10M7 8l6-6" /></g>,
];

function Well({ label, gap, children }: P & { label: string; gap: string }) {
  return (
    <>
      <span className={`ml-[10px] block leading-5 ${gap}`}>{label}</span>
      {children}
    </>
  );
}

function Drop({ height, children }: P & { height: string }) {
  return <div className={`w-[213px] shrink-0 rounded-[2px] border border-dashed border-[#c0bebc] bg-white ${height}`}>{children}</div>;
}

function Pill({ name }: { name: string }) {
  return (
    <div className="mx-[3px] mt-[3px] flex h-[29px] items-center rounded-[2px] border border-[#bebbb8] bg-[#edebe9] pl-[5px]">
      {name}
      <svg viewBox="0 0 15 8" className="mr-[7px] ml-auto h-2 w-[15px]" fill="none" stroke="#3b3a39" strokeWidth="1.200">
        <path d="M.5.500l7 7 7-7" />
      </svg>
      <svg viewBox="0 0 11 11" className="mr-[4px] size-[11px]" stroke="#3b3a39" strokeWidth="1.300">
        <path d="M.5.500l10 10M10.500.500l-10 10" />
      </svg>
    </div>
  );
}

function VisualizationsPane() {
  return (
    <aside className="flex w-[227px] shrink-0 flex-col border-x border-[#dddbd9] bg-[#f3f2f1] text-[#252423]">
      <div className="flex items-center pt-[11px] pr-[10px] pl-[10px] leading-7">
        <h2 className="text-[19.3px] font-semibold tracking-[-0.3px]">Visualizations</h2>
        <span className="ml-auto">
          <DoubleChevron />
        </span>
      </div>
      <span className="mt-[9px] ml-[10px] text-[14.3px] leading-5 font-semibold tracking-[-0.18px]">Build visual</span>
      <div className="mt-[4px] flex h-[54px] pl-[10px]">
        <div className="flex size-10 shrink-0 items-center justify-center rounded-[3px] bg-[#d2d0ce]">
          <svg viewBox="0 0 30 30" className="h-[30px] w-[30px]">
            <path d="M0 1h24" stroke="#252423" strokeWidth="1.500" />
            <path d="M1 7h28v9H1zM1 20h28v9H1z" fill="#117865" stroke="#fff" strokeWidth="1.800" />
            <path d="M1 7h28v9H1zM1 20h28v9H1z" fill="none" stroke="#252423" strokeWidth="1.800" strokeDasharray="2 1.500" />
          </svg>
        </div>
        <svg viewBox="0 0 28 30" className="mt-[6px] ml-[51px] h-[30px] w-7" fill="none" stroke="#252423" strokeWidth="1.500">
          <path d="M1 25V13h7v10M8 16V1h8v14M16 8h8M1 25h6" />
          <path d="M26 11L15 23l-3-2L25 10z" fill="#a19f9d" />
          <path d="M12 21c-5 0-3 6-8 7 6 2 11 0 11-5z" fill="#f3f2f1" />
        </svg>
        <svg viewBox="0 0 30 30" className="mt-[5px] ml-[51px] size-[30px]" fill="none" stroke="#252423" strokeWidth="1.500">
          <circle cx="13" cy="13" r="12" />
          <path d="M2 15l6-6 5 4 9-7M8 24v-7M12.500 24v-8M17 24v-9M21 20v-7" />
          <path d="M22 22l7 7" strokeWidth="3" />
        </svg>
      </div>
      <svg viewBox="0 0 225 12" className="-mt-[9px] h-[12px] w-[225px] shrink-0" fill="none" stroke="#979593" strokeWidth="1.500">
        <path d="M0 10.500h20.500l9.500-9.500 9.500 9.500H225" />
      </svg>
      <div className="mt-[7px] grid h-[245px] grid-cols-[repeat(6,35px)] grid-rows-[repeat(7,35px)] pl-[8px]">
        {visualIcons.map((icon, i) => (
          <div key={i} className={`flex items-center justify-center ${i === 15 ? "m-[2px] border border-[#252423] bg-[#faf9f8]" : ""}`}>
            <svg viewBox="0 0 24 24" className="size-[23px] shrink-0 overflow-visible">
              {icon}
            </svg>
          </div>
        ))}
      </div>
      <div className="mt-[14px] ml-[16px] flex gap-[6px]">
        <i className="size-[2px] bg-[#252423]" />
        <i className="size-[2px] bg-[#252423]" />
        <i className="size-[2px] bg-[#252423]" />
      </div>
      <div className="mt-[24px] flex h-[359px] shrink-0 justify-between border-t border-[#dddbd9] pl-[5px]">
        <div className="flex flex-col overflow-hidden text-[14.5px] tracking-[-0.22px]">
          <Well label="Values" gap="mt-[11px] mb-[6px]">
            <Drop height="h-[35px] pl-[12px] leading-[33px] tracking-[-0.12px]">Add data fields here</Drop>
          </Well>
          <Well label="X Axis" gap="mt-[14px] mb-[6px]">
            <Drop height="h-[45px] pt-px">
              <Pill name="Profit" />
            </Drop>
          </Well>
          <Well label="Y Axis" gap="mt-[13px] mb-[7px]">
            <Drop height="h-[36px]">
              <Pill name="Net Sales" />
            </Drop>
          </Well>
          <Well label="Legend" gap="mt-[13px] mb-[7px]">
            <Drop height="h-[35px] pl-[12px] leading-[32px] tracking-[-0.12px]">Add data fields here</Drop>
          </Well>
          <Well label="Size" gap="mt-[13px] mb-[7px]">
            <div className="h-[9px] overflow-hidden">
              <Drop height="h-[35px]" />
            </div>
          </Well>
        </div>
        <div className="mt-[2px] h-[187px] w-[7px] rounded-full bg-[#cfcdcb]" />
      </div>
    </aside>
  );
}

/* ---------- data pane ---------- */

const tableGlyph = <path d="M5 1.500h7a3 3 0 0 1 3 3v7a3 3 0 0 1-3 3H5a3 3 0 0 1-3-3v-7a3 3 0 0 1 3-3zM2 5.500h13M2 10.500h13M6 1.500v13M11 1.500v13" />;

function DataRow({ name, kind }: { name: string; kind: "measure" | "calc" | "table" | "fact" }) {
  return (
    <div className="flex h-[30px] items-center text-[#3b3a39]">
      <svg viewBox="0 0 8 14" className="-mt-px ml-[19px] h-[14px] w-2" fill="none" stroke="#484644" strokeWidth="1.200">
        <path d="M.5.500L7.500 7l-7 6.500" />
      </svg>
      <svg viewBox="0 0 18 18" className="ml-[8px] size-[18px] overflow-visible" fill="none" stroke="#484644" strokeWidth="1.400">
        {kind === "measure" && (
          <>
            <path d="M4 1h8a2 2 0 0 1 2 2v10a2 2 0 0 1-2 2H4a2 2 0 0 1-2-2V3a2 2 0 0 1 2-2zM4.500 4h7v2h-7zM16 4v9a4 4 0 0 1-4 4H5" />
            <path d="M5 9h1.500M9.500 9H11M5 12h1.500M9.500 12H11" strokeWidth="2" />
          </>
        )}
        {kind === "calc" && (
          <>
            {tableGlyph}
            <path d="M10 7h9v12h-9z" fill="#f3f2f1" stroke="#f3f2f1" />
            <path d="M11 6.500h7v11h-7zM11 10h7M11 14h7M14.500 10v7" />
          </>
        )}
        {(kind === "table" || kind === "fact") && tableGlyph}
        {kind === "fact" && (
          <g>
            <circle cx="16.500" cy="15.500" r="7.300" fill="#117865" stroke="none" />
            <path d="M14 15.500l2 2 3.500-3.500" stroke="white" strokeWidth="1.500" />
          </g>
        )}
      </svg>
      <span className="-mt-px ml-[6px]">{name}</span>
    </div>
  );
}

function DataPane() {
  return (
    <aside className="flex grow flex-col bg-[#f3f2f1] text-[#252423]">
      <div className="flex items-center pt-[11px] pr-[10px] pl-[11px] leading-7">
        <h2 className="text-[19.3px] font-semibold tracking-[-0.5px]">Data</h2>
        <span className="ml-auto">
          <DoubleChevron />
        </span>
      </div>
      <div className="mt-[18px] ml-[5px] flex h-[30px] w-[215px] items-center rounded-[4px] border border-[#d1cfcd] border-b-[#605e5c] bg-white">
        <svg viewBox="0 0 18 18" className="ml-[14px] size-[18px]" fill="none" stroke="#605e5c" strokeWidth="1.300">
          <circle cx="7.500" cy="7.500" r="6.500" />
          <path d="M12.200 12.200L17.500 17.500" />
        </svg>
        <span className="mt-[3px] ml-[9px] text-[16px] tracking-[0.1px] text-[#706e6c]">Search</span>
      </div>
      <div className="mt-[12px] text-[14.5px] tracking-[-0.28px] whitespace-nowrap">
        <DataRow name="Measure Table" kind="measure" />
        <DataRow name="Date Table 1" kind="calc" />
        <DataRow name="Date Table 2" kind="calc" />
        <DataRow name="Dim Customers" kind="table" />
        <DataRow name="Dim Product" kind="table" />
        <DataRow name="Dim Promotion" kind="table" />
        <DataRow name="Fact Table" kind="fact" />
      </div>
    </aside>
  );
}

/* ---------- status bar ---------- */

function StatusBar() {
  return (
    <footer className="flex h-[30px] shrink-0 items-center border-t border-b border-t-[#dddbd9] border-b-black bg-[#f3f2f1] text-[14.5px] tracking-[-0.05px] whitespace-nowrap text-[#484644]">
      <span className="mt-[3px] ml-[5px]">Page 1 of 5</span>
      <span className="ml-auto h-[2px] w-[6px] bg-[#605e5c]" />
      <div className="ml-[5px] flex h-[13px] w-[125px] items-center">
        <span className="h-px w-[60px] bg-[#605e5c]" />
        <span className="h-[13px] w-[5px] bg-[#605e5c]" />
        <span className="h-px w-[60px] bg-[#605e5c]" />
      </div>
      <svg viewBox="0 0 10 10" className="ml-[7px] size-[10px]" stroke="#605e5c" strokeWidth="1.800">
        <path d="M5 0v10M0 5h10" />
      </svg>
      <span className="ml-[17px] w-[36px] tracking-[-0.3px] text-[#605e5c]">100%</span>
      <svg viewBox="0 0 20 16" className="mt-px ml-[16px] h-4 w-5" fill="none" stroke="#605e5c" strokeWidth="1.300">
        <path d="M.7.700h18.600v14.600H.7z" />
        <path d="M3.500 6V3.500H6M14 3.500h2.500V6M16.500 10v2.500H14M6 12.500H3.500V10" />
      </svg>
      <span className="mt-[3px] ml-[17px] w-[245px] tracking-[-0.1px]">Update available (click to download)</span>
    </footer>
  );
}

/* ---------- taskbar ---------- */

function TaskIcon({ dot, children }: P & { dot?: boolean }) {
  return (
    <div className="flex h-full w-[55px] shrink-0 flex-col items-center pt-[15px]">
      <svg viewBox="0 0 30 30" className="size-[30px] shrink-0 overflow-visible">
        {children}
      </svg>
      {dot && <i className="mt-[5px] h-1 w-2 rounded-full bg-[#7c7b7a]" />}
    </div>
  );
}

function Taskbar() {
  return (
    <div className="flex h-[60px] shrink-0 items-start bg-[#dcdbdb] text-[14.5px] leading-5 tracking-[-0.1px] whitespace-nowrap text-[#1b1a19]">
      <svg viewBox="0 0 38 44" className="mt-[7px] ml-[24px] h-11 w-[38px]">
        <g fill="#f39a16" stroke="#c96f04" strokeWidth="0.700">
          <path d="M3 22v5c0 4 22 4 22 0v-5z" />
          <ellipse cx="14" cy="22" rx="11" ry="3.500" fill="#ffb53a" />
          <path d="M8 15v4c0 3 18 3 18 0v-4z" />
          <path d="M3 10v4c0 3 18 3 18 0v-4z" />
          <ellipse cx="12" cy="10" rx="9" ry="3" fill="#ffb53a" />
        </g>
        <path d="M11 38l5.500-5 5.500 5" fill="none" stroke="#5cae13" strokeWidth="3.600" />
        <circle cx="25" cy="11" r="10" fill="#c42b1c" />
        <text x="25" y="16" textAnchor="middle" fontSize="14" fill="white">8</text>
      </svg>
      <div className="mt-[10px] ml-[2px] w-[369px]">
        <div>Gold</div>
        <div className="tracking-[0.2px] text-[#107c10]">+0.67%</div>
      </div>
      <svg viewBox="0 0 30 30" className="mt-[16px] ml-[14px] size-[30px]">
        <defs>
          <linearGradient id="win" x1="0" y1="0" x2="1" y2="1">
            <stop offset="0" stopColor="#4fd0fb" />
            <stop offset="1" stopColor="#0568d0" />
          </linearGradient>
        </defs>
        <path d="M0 1.500Q0 0 1.500 0H14.300v14.300H0zM15.700 0h12.800q1.500 0 1.500 1.500v12.800H15.700zM0 15.700h14.300V30H1.500Q0 30 0 28.500zM15.700 15.700H30v12.800q0 1.500-1.500 1.500H15.700z" fill="url(#win)" />
      </svg>
      <div className="mt-[11px] ml-[17px] flex h-[39px] w-[273px] items-center rounded-full border border-[#c9c8c8] bg-[#f4f4f4]">
        <svg viewBox="0 0 20 20" className="-mt-px ml-[13px] size-5" fill="none" stroke="#252423" strokeWidth="1.900">
          <circle cx="8.500" cy="8.500" r="7" />
          <path d="M13.500 13.500l5 5" strokeWidth="2.400" />
        </svg>
        <span className="ml-[11px] text-[16px] tracking-[0.15px] text-[#605e5c]">Search</span>
        <svg viewBox="0 0 52 34" className="mr-[9px] ml-auto h-[34px] w-[52px]">
          <path d="M8 24c-1 5 0 8 1 10M44 18c1 6 1 11 0 16" stroke="#5b9a3c" fill="none" />
          <path d="M1 18l4 2 1-5 3 4 4-4-1 5 3 1-3 4H5zM38 15l3 1 1-4 3 3 4-3-1 5 3 0-3 4h-7z" fill="#ee7fb4" stroke="#d9558f" strokeWidth="0.500" />
          <path d="M12 34c0-6 5-8 14-8s14 2 14 8z" fill="#3f9e8a" />
          <path d="M16 29c-1-12 1-20 10-20s11 8 10 20z" fill="#2c1a16" />
          <ellipse cx="26" cy="18.500" rx="6.500" ry="8.500" fill="#f3bf93" />
          <path d="M18 14c-1-4 1-7 4-8 0-3 2-6 4-6s4 3 4 6c3 1 5 4 4 8-4-3-12-3-16 0z" fill="#d99a2a" stroke="#a4600c" strokeWidth="0.700" />
          <path d="M21 6h10M20 9h12" stroke="#a4600c" strokeWidth="0.700" />
          <path d="M22 28c2 2 6 2 8 0l3 6H19z" fill="#e5a11c" />
          <path d="M18.500 18v5M33.500 18v5" stroke="#e5a11c" strokeWidth="1.600" />
          <circle cx="26" cy="4" r="1.200" fill="#c42b1c" />
          <circle cx="26" cy="14.500" r="0.900" fill="#c42b1c" />
          <path d="M22 18h2.800M27.200 18H30" stroke="#2c1a16" strokeWidth="1.100" />
          <path d="M24 23c1 1 3 1 4 0" stroke="#b8322a" fill="none" />
        </svg>
      </div>
      <div className="ml-[3px] flex h-full">
        <TaskIcon>
          <path d="M1 9h22v19H1z" fill="#2b2a29" />
          <path d="M8 1h21v18H8z" fill="#f5f5f5" />
          <path d="M8 9h15v10H8z" fill="#b5b4b3" />
        </TaskIcon>
        <TaskIcon dot>
          <circle cx="15" cy="15" r="15" fill="#e8453c" />
          <path d="M2 7.500A15 15 0 0 0 13 30l8-13H9z" fill="#34a853" />
          <path d="M15 30A15 15 0 0 0 28 8H15l6.500 10z" fill="#fbbc05" />
          <path d="M15 8h13A15 15 0 0 0 2 7.500L8.500 18z" fill="#e8453c" />
          <circle cx="15" cy="15" r="7" fill="white" />
          <circle cx="15" cy="15" r="5.500" fill="#2f7de8" />
        </TaskIcon>
        <TaskIcon dot>
          <defs>
            <linearGradient id="edge" x1="0" y1="0" x2="1" y2="0.300">
              <stop offset="0" stopColor="#1c9de0" />
              <stop offset="1" stopColor="#5fdc6c" />
            </linearGradient>
          </defs>
          <circle cx="15" cy="15" r="15" fill="#1474c8" />
          <path d="M0 14C1 5 7 0 15 0c9 0 15 6 15 12 0 5-4 7-8 7-3 0-4-1-3-3 1-4-3-8-8-8S1 10 0 14z" fill="url(#edge)" />
          <path d="M11 11c-4 4-3 13 5 17 4 1 9 0 12-5-8 4-18-2-17-12z" fill="#0c4f96" />
          <path d="M19 15c-2 3 0 6 4 6 3 0 6-2 7-4 0 2-1 4-2 5-6 2-11 0-12-5 0-2 1-3 3-2z" fill="#dcdbdb" />
        </TaskIcon>
        <div className="flex h-full w-[55px] justify-center pt-[16px]">
          <CopilotLogo className="h-[28px] w-[30px]" />
        </div>
        <TaskIcon>
          <circle cx="25" cy="7.500" r="3.500" fill="#5b62c8" />
          <circle cx="16" cy="6" r="5" fill="#7b83eb" />
          <path d="M20 12h9v8c0 4-3 6-6 5z" fill="#5b62c8" />
          <path d="M8 12h15v9c0 9-14 9-15 0z" fill="#7b83eb" />
          <rect x="0" y="7" width="15" height="15" rx="1.500" fill="#464eb8" />
          <path d="M4 11h7M7.500 11v8" stroke="white" strokeWidth="2" />
        </TaskIcon>
        <TaskIcon dot>
          <path d="M0 3h11l3 4H0z" fill="#d89a12" />
          <rect x="0" y="5" width="30" height="24" rx="2" fill="#ffcd3c" />
          <path d="M0 5h10l3-1h15v3H0z" fill="#e9ab1f" />
          <path d="M5 29v-6q0-2 2-2h16q2 0 2 2v6z" fill="#1180d4" />
          <path d="M10 25h10" stroke="#0b4d90" strokeWidth="2" />
        </TaskIcon>
        <TaskIcon>
          <path d="M9 6V1h12v5" fill="none" stroke="#2bb1ee" strokeWidth="2" />
          <path d="M1 5h28v21q0 4-4 4H5q-4 0-4-4z" fill="#14507f" />
          <path d="M9.500 12h5v5h-5z" fill="#f25022" />
          <path d="M15.500 12h5v5h-5z" fill="#7fba00" />
          <path d="M9.500 18h5v5h-5z" fill="#00a4ef" />
          <path d="M15.500 18h5v5h-5z" fill="#ffb900" />
        </TaskIcon>
        <TaskIcon>
          <path d="M15 1l13 7v14l-13 7L2 22V8z" fill="#5d6268" />
          <path d="M15 1l13 7-4 2-9-5-9 5-4-2z" fill="#3a3e43" />
          <path d="M28 8v14l-5-2V10z" fill="#8f9399" />
          <path d="M2 22l7-3 14 1 5 2-13 7z" fill="#84888d" />
          <path d="M15 6l5 5v8L9 22z" fill="#17191b" />
          <path d="M9 22l11-3-5 10z" fill="#d6d8da" />
        </TaskIcon>
        <TaskIcon>
          <defs>
            <linearGradient id="mx" x1="0" y1="0" x2="0.300" y2="1">
              <stop offset="0" stopColor="#1a86ff" />
              <stop offset="1" stopColor="#4a20e8" />
            </linearGradient>
          </defs>
          <path d="M0 0h30v30H0z" fill="url(#mx)" />
          <path d="M4 21l6-12M10 21l6-12M16 21l7-12v12" fill="none" stroke="white" strokeWidth="2.200" />
        </TaskIcon>
        <TaskIcon>
          <rect x="3" y="3" width="24" height="25" rx="5" fill="#06201a" />
          <ellipse cx="15" cy="15" rx="5.500" ry="5" fill="#12c99b" />
          <ellipse cx="15" cy="15" rx="8.500" ry="3" transform="rotate(38 15 15)" fill="none" stroke="#12c99b" strokeWidth="1.300" />
          <path d="M11.500 11.500c4 1 7 4 8 6.500" stroke="#06201a" strokeWidth="1.200" fill="none" />
        </TaskIcon>
        <TaskIcon>
          <path d="M0 0h30v30H0z" fill="#3f9bfb" />
          <circle cx="15" cy="11" r="11" fill="none" stroke="white" strokeWidth="3" />
          <path d="M13 21c6 0 9 3 9 9M0 19c5 1 6 5 4 11" fill="none" stroke="white" strokeWidth="2.600" />
        </TaskIcon>
        <TaskIcon dot>
          <path d="M1 14l3-4 18 14v6L1 16z" fill="#0f74bd" />
          <path d="M1 20L22 0v9L5 23z" fill="#1686d0" />
          <path d="M22 0l7 3q1 .5 1 1.500v21q0 1-1 1.500l-7 3z" fill="#29a3f2" />
        </TaskIcon>
      </div>
      <div className="mt-[5px] ml-[3px] flex h-[49px] w-[48px] flex-col items-center rounded-[5px] border border-[#e6e5e5] bg-[#efeeee] pt-[9px]">
        <svg viewBox="0 0 22 30" className="ml-px h-[30px] w-[22px]">
          <path d="M11 1q0-1 1-1h9q1 0 1 1v28q0 1-1 1H11z" fill="#cf8e10" />
          <path d="M6 8q0-1 1-1h8q1 0 1 1v22H6z" fill="#edbe2b" />
          <path d="M0 16q0-1 1-1h8q1 0 1 1v14H1q-1 0-1-1z" fill="#f7dc68" />
        </svg>
        <i className="mt-[5px] h-1 w-5 shrink-0 rounded-full bg-[#0078d4]" />
      </div>
      <Chevron dir="up" className="mt-[21px] ml-[103px] size-[17px] stroke-[1.9]" />
      <svg viewBox="0 0 22 20" className="mt-[20px] ml-[21px] h-5 w-[22px]" fill="#c8c7c7" stroke="#1b1a19" strokeWidth="1.500">
        <path d="M5 16c-5 0-5-7 0-7 1-8 11-8 12 0 5 0 5 7 0 7zM3 2l17 17" />
      </svg>
      <div className="mt-[11px] ml-[17px] w-[40px] text-center">
        <div>ENG</div>
        <div>IN</div>
      </div>
      <svg viewBox="0 0 22 22" className="mt-[19px] ml-[16px] size-[22px]" fill="none" stroke="#1b1a19" strokeWidth="1.500">
        <path d="M13 2H4Q2 2 2 4v10q0 2 2 2h13M7 20h9M9 16v4M14 16v4M15 1h5v6h-5zM18 7v13" />
      </svg>
      <svg viewBox="0 0 20 18" className="mt-[21px] ml-[8px] h-[18px] w-5" fill="none" stroke="#1b1a19" strokeWidth="1.400">
        <path d="M1 6v6h3l5 4V2L4 6zM12 6q2 3 0 6M14.500 3.500q4 5.500 0 11M17 1.500q5 7.500 0 15" />
      </svg>
      <svg viewBox="0 0 21 14" className="mt-[23px] ml-[11px] h-[14px] w-[21px]" fill="none" stroke="#1b1a19" strokeWidth="1.500">
        <rect x="1" y="1" width="16" height="12" rx="3" />
        <path d="M4.500 4v6" strokeWidth="3" />
        <path d="M19 5v4" strokeWidth="2" />
      </svg>
      <div className="mt-[10px] mr-[24px] ml-auto text-right tracking-[0.1px]">
        <div>06:47</div>
        <div>22-09-2025</div>
      </div>
    </div>
  );
}

export default function App() {
  return (
    <div className="flex h-[1080px] w-[1920px] flex-col overflow-hidden bg-[#fafafa] font-['Open_Sans','Noto_Sans',sans-serif]">
      <TitleBar />
      <Tabs />
      <Ribbon />
      <div className="flex h-[790px] shrink-0 bg-[#f3f2f1]">
        <LeftNav />
        <Canvas />
        <FiltersPane />
        <VisualizationsPane />
        <DataPane />
      </div>
      <StatusBar />
      <Taskbar />
    </div>
  );
}
